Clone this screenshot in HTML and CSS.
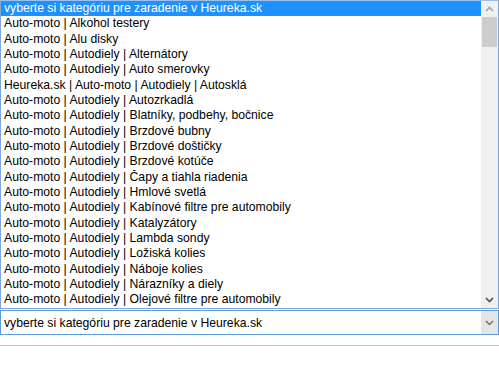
FILE: index.html
```html
<!DOCTYPE html>
<html>
<head>
<meta charset="utf-8">
<link rel="stylesheet" href="styles.css">
</head>
<body>
<div class="listbox">
  <ul class="options">
    <li class="selected">vyberte si kategóriu pre zaradenie v Heureka.sk</li>
    <li>Auto-moto | Alkohol testery</li>
    <li>Auto-moto | Alu disky</li>
    <li>Auto-moto | Autodiely | Alternátory</li>
    <li>Auto-moto | Autodiely | Auto smerovky</li>
    <li>Heureka.sk | Auto-moto | Autodiely | Autosklá</li>
    <li>Auto-moto | Autodiely | Autozrkadlá</li>
    <li>Auto-moto | Autodiely | Blatníky, podbehy, bočnice</li>
    <li>Auto-moto | Autodiely | Brzdové bubny</li>
    <li>Auto-moto | Autodiely | Brzdové doštičky</li>
    <li>Auto-moto | Autodiely | Brzdové kotúče</li>
    <li>Auto-moto | Autodiely | Čapy a tiahla riadenia</li>
    <li>Auto-moto | Autodiely | Hmlové svetlá</li>
    <li>Auto-moto | Autodiely | Kabínové filtre pre automobily</li>
    <li>Auto-moto | Autodiely | Katalyzátory</li>
    <li>Auto-moto | Autodiely | Lambda sondy</li>
    <li>Auto-moto | Autodiely | Ložiská kolies</li>
    <li>Auto-moto | Autodiely | Náboje kolies</li>
    <li>Auto-moto | Autodiely | Nárazníky a diely</li>
    <li>Auto-moto | Autodiely | Olejové filtre pre automobily</li>
  </ul>
  <div class="scrollbar">
    <div class="sb-btn up">
      <svg width="9" height="6" viewBox="0 0 9 6"><path d="M1 5 L4.5 1.5 L8 5" fill="none" stroke="#a3a3a3" stroke-width="1.6"/></svg>
    </div>
    <div class="sb-track">
      <div class="sb-thumb"></div>
    </div>
    <div class="sb-btn down">
      <svg width="9" height="6" viewBox="0 0 9 6"><path d="M1 1 L4.5 4.5 L8 1" fill="none" stroke="#505050" stroke-width="1.6"/></svg>
    </div>
  </div>
</div>
<div class="select">
  <span class="select-text">vyberte si kategóriu pre zaradenie v Heureka.sk</span>
  <span class="select-arrow">
    <svg width="9" height="6" viewBox="0 0 9 6"><path d="M1 1 L4.5 4.5 L8 1" fill="none" stroke="#6b6b6b" stroke-width="1.4"/></svg>
  </span>
</div>
<div class="rule"></div>
</body>
</html>
```

FILE: styles.css
```css
html, body {
  margin: 0;
  padding: 0;
  background: #ffffff;
}

body {
  font-family: "Liberation Sans", Arial, sans-serif;
  font-size: 12.2px;
  color: #000000;
}

.listbox {
  display: flex;
  width: 499px;
  height: 309px;
  box-sizing: border-box;
  border: 1px solid #7fa6d6;
  border-top-color: #9cc0ea;
  overflow: hidden;
}

.options {
  list-style: none;
  margin: 0;
  padding: 0;
  flex: 1;
  min-width: 0;
}

.options li {
  line-height: 15.33px;
  height: 15.33px;
  padding: 0 3px;
  white-space: nowrap;
  overflow: hidden;
}

.options li.selected {
  background: #1e90ff;
  color: #ffffff;
}

.scrollbar {
  width: 17px;
  display: flex;
  flex-direction: column;
  background: #f0f0f0;
}

.sb-btn {
  height: 16px;
  display: flex;
  align-items: center;
  justify-content: center;
}

.sb-track {
  flex: 1;
  padding: 0 1px;
}

.sb-thumb {
  height: 30px;
  background: #cdcdcd;
}

.select {
  margin-top: 1px;
  width: 499px;
  height: 25px;
  box-sizing: border-box;
  border: 1px solid #5a9be0;
  display: flex;
  align-items: center;
  background: #ffffff;
}

.select-text {
  flex: 1;
  padding-left: 3px;
  white-space: nowrap;
}

.select-arrow {
  width: 17px;
  align-self: stretch;
  background: #e5e5e5;
  display: flex;
  align-items: center;
  justify-content: center;
}

.rule {
  margin-top: 10px;
  height: 0;
  border-top: 1px solid #c4c4c4;
  width: 499px;
}
```
